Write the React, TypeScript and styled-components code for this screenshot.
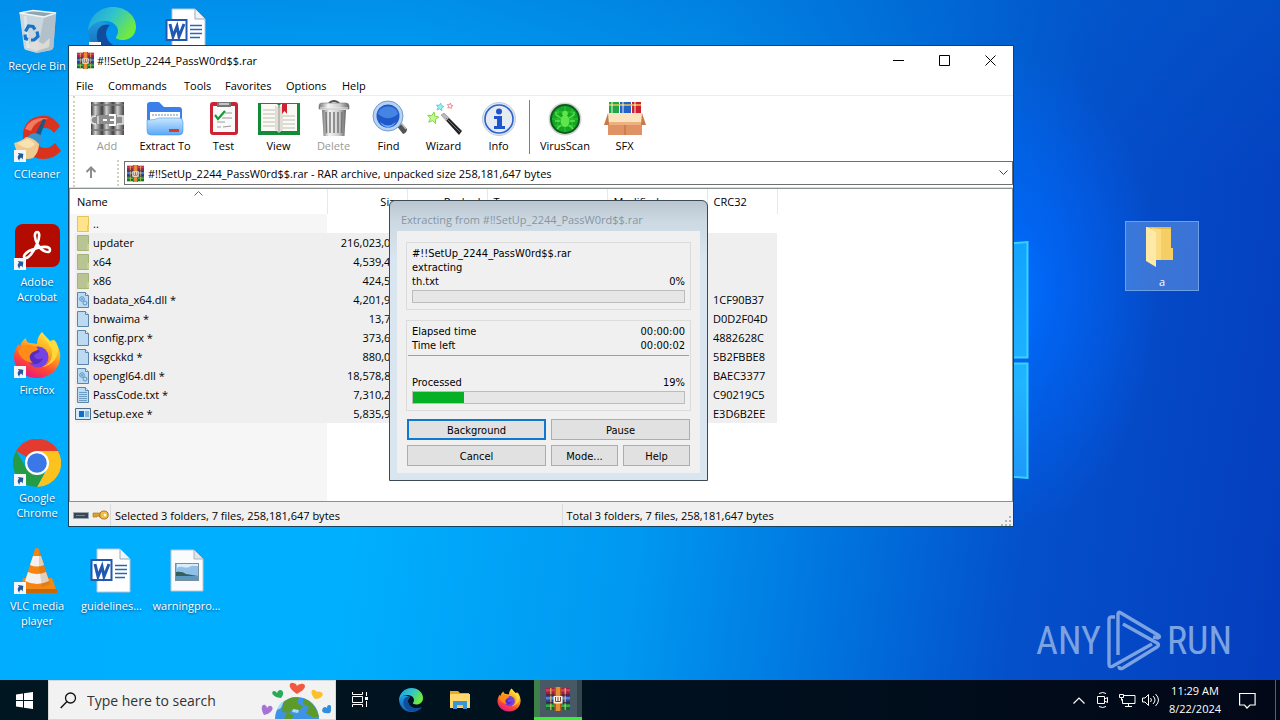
import React from 'react';
import styled, { createGlobalStyle } from 'styled-components';

const GlobalStyle = createGlobalStyle`
  *, *::before, *::after { box-sizing: border-box; }
  body { margin: 0; font-family: "Open Sans", "Noto Sans", sans-serif; font-size: 11px; line-height: 15px; color: #000; }
  button, input, select { font: inherit; color: inherit; margin: 0; }
  button { cursor: default; }
  svg { display: block; flex: none; }
`;

/* ---------- desktop ---------- */

const Screen = styled.div`
  min-height: 100vh;
  display: flex;
  flex-direction: column;
  overflow: hidden;
`;

const Desktop = styled.main`
  position: relative;
  flex: 1;
  min-height: 680px;
  overflow: hidden;
  background:
    radial-gradient(ellipse 150px 240px at 1010px 290px, #0070ff 0%, rgba(0, 106, 255, 0.7) 30%, rgba(0, 85, 225, 0) 100%),
    linear-gradient(180deg, rgba(0, 92, 200, 0.38) 0%, rgba(0, 92, 200, 0) 26%),
    linear-gradient(98deg, #00adff 0%, #00b0ff 30%, #0098f0 52%, #0070dc 68%, #0450cb 80%, #043dbd 100%);
`;

const Wallpaper = styled.svg`
  position: absolute;
  left: 0;
  top: 0;
`;

const IconGrid = styled.div`
  display: grid;
  grid-template-columns: 74px 75px 75px;
  grid-template-rows: repeat(6, 108px);
  padding-top: 5px;
`;

const Shortcut = styled.button<{ $col: number; $row: number }>`
  grid-column: ${(p) => p.$col};
  grid-row: ${(p) => p.$row};
  display: flex;
  flex-direction: column;
  align-items: center;
  gap: 3px;
  padding: 2px 0 0;
  border: 0;
  background: none;
  color: #fff;
  text-shadow: 0 1px 2px rgba(0, 30, 80, 0.7);
`;

const ShortcutLabel = styled.span`
  max-width: 72px;
  min-height: 30px;
`;

const SelectedFolder = styled.button`
  position: absolute;
  right: 81px;
  top: 221px;
  width: 74px;
  height: 70px;
  display: flex;
  flex-direction: column;
  align-items: center;
  gap: 6px;
  padding: 4px 0 0;
  border: 1px solid #6ba0e6;
  background: rgba(112, 160, 230, 0.5);
  color: #fff;
`;

const Watermark = styled.div`
  position: absolute;
  right: 48px;
  bottom: 7px;
  display: flex;
  align-items: center;
  gap: 5px;
  font-family: "Roboto Condensed", "Open Sans Condensed", sans-serif;
  font-size: 38px;
  font-weight: 400;
  line-height: 64px;
  color: #7ba3e2;
`;

/* ---------- archive window ---------- */

const Window = styled.section`
  position: absolute;
  left: 68px;
  right: 266px;
  top: 45px;
  display: flex;
  flex-direction: column;
  border: 1px solid #17425f;
  background: #fff;
`;

const TitleBar = styled.header`
  display: flex;
  align-items: center;
  height: 29px;
  margin-bottom: 1px;
  padding-left: 8px;
`;

const Title = styled.h1`
  flex: 1;
  margin: 0 0 0 3px;
  font-size: 11px;
  font-weight: 400;
`;

const CaptionButton = styled.button`
  width: 46px;
  height: 29px;
  display: grid;
  place-items: center;
  padding: 0;
  border: 0;
  background: none;
`;

const MenuBar = styled.nav`
  display: flex;
  height: 20px;
  gap: 14px;
  padding-left: 7px;
  border-bottom: 1px solid #ececec;
`;

const MenuItem = styled.button<{ $w: number }>`
  width: ${(p) => p.$w}px;
  padding: 0 0 1px;
  border: 0;
  background: none;
  white-space: nowrap;
  text-align: left;
`;

const BarArea = styled.div`
  padding-left: 4px;
  border-bottom: 1px solid #dcdcdc;
`;

const Bars = styled.div`
  border-left: 2px dotted #cdd4b8;
`;

const Toolbar = styled.div`
  display: flex;
  height: 64px;
  padding: 4px 0 0 5px;
`;

const Tool = styled.button<{ $w: number }>`
  width: ${(p) => p.$w}px;
  display: flex;
  flex-direction: column;
  align-items: center;
  height: 54px;
  padding: 0;
  border: 0;
  background: none;
  white-space: nowrap;
  &:disabled { color: #999; }
`;

const ToolSeparator = styled.span`
  width: 1px;
  height: 54px;
  margin: 0 3px;
  background: #808080;
`;

const AddressRow = styled.div`
  display: flex;
  height: 27px;
  align-items: flex-start;
`;

const UpButton = styled.button`
  width: 44px;
  height: 26px;
  padding: 0 0 2px 9px;
  border: 0;
  border-right: 2px dotted #cdd4b8;
  background: none;
`;

const AddressBox = styled.div`
  flex: 1;
  display: flex;
  align-items: center;
  gap: 4px;
  height: 24px;
  margin: 1px 0 0 5px;
  padding: 0 4px 0 2px;
  border: 1px solid #707070;
`;

const AddressSelect = styled.select`
  flex: 1;
  min-width: 0;
  padding: 0;
  border: 0;
  outline: 0;
  background: none;
  appearance: none;
`;

const FileArea = styled.div`
  min-height: 314px;
  padding-left: 5px;
  border: 1px solid #8a9191;
  border-left-color: #9aa4ac;
  background: linear-gradient(#f6f6f6, #f6f6f6) 0 25px / 257px 100% no-repeat;
`;

const FileTable = styled.table`
  width: 702px;
  table-layout: fixed;
  border-collapse: collapse;
`;

const HeadCell = styled.th<{ $w: number; $right?: boolean }>`
  position: relative;
  width: ${(p) => p.$w}px;
  height: 25px;
  padding: 0 6px 1px ${(p) => (p.$w > 200 ? 2 : 6)}px;
  font-weight: 400;
  text-align: ${(p) => (p.$right ? 'right' : 'left')};
  border-right: 1px solid #e8e8e8;
`;

const SortMark = styled.svg`
  position: absolute;
  left: 119px;
  top: 1px;
`;

const FileRow = styled.tr<{ $selected: boolean }>`
  height: 19px;
  background: ${(p) => (p.$selected ? '#efefef' : 'transparent')};
`;

const Cell = styled.td<{ $right?: boolean }>`
  height: 19px;
  padding: 0 4px 0 6px;
  white-space: nowrap;
  text-align: ${(p) => (p.$right ? 'right' : 'left')};
`;

const NameCell = styled.td`
  padding: 0;
`;

const FileName = styled.div`
  display: flex;
  align-items: center;
  height: 19px;
  gap: 2px;
`;

const StatusBar = styled.footer`
  position: relative;
  display: flex;
  height: 24px;
  align-items: flex-end;
  background: #f0f0f0;
`;

const StatusIcons = styled.div`
  display: flex;
  align-items: center;
  width: 42px;
  height: 22px;
  gap: 3px;
  padding-left: 4px;
  border-right: 1px solid #dadada;
`;

const StatusText = styled.div`
  flex: 1;
  height: 22px;
  padding: 4px 0 0 4px;
  & + & { border-left: 1px solid #dadada; }
`;

const SizeGrip = styled.svg`
  position: absolute;
  right: 0;
  bottom: 0;
`;

/* ---------- progress dialog ---------- */

const Dialog = styled.section`
  position: absolute;
  left: 389px;
  top: 200px;
  width: 319px;
  padding: 0 7px 7px;
  border: 1px solid #3c4a58;
  border-radius: 6px 6px 0 0;
  background: linear-gradient(#b9c6d0 0, #ccd9e3 20px, #d9e5ef 60px);
`;

const DialogTitle = styled.h2`
  margin: 0;
  height: 30px;
  padding: 11px 0 0 4px;
  font-size: 11px;
  font-weight: 400;
  line-height: 16px;
  color: #8795a2;
`;

const DialogBody = styled.div`
  padding: 11px 9px 7px;
  background: #f0f0f0;
  font-family: "DejaVu Sans Condensed", "DejaVu Sans", sans-serif;
`;

const Group = styled.div`
  margin-bottom: 10px;
  padding: 4px 5px 6px;
  border: 1px solid #dcdcdc;
  line-height: 14px;
`;

const Line = styled.div`
  display: flex;
  justify-content: space-between;
`;

const Rule = styled.hr`
  margin: 2px -4px 20px;
  border: 0;
  border-top: 1px solid #a0a0a0;
`;

const Meter = styled.div`
  height: 13px;
  margin-top: 1px;
  border: 1px solid #bcbcbc;
  background: #e6e6e6;
`;

const MeterFill = styled.div`
  height: 11px;
  background: #06b025;
`;

const ButtonGrid = styled.div`
  display: grid;
  grid-template-columns: 139px 67px 67px;
  grid-auto-rows: 21px;
  gap: 5px;
  margin: -2px 0 0 1px;
`;

const PushButton = styled.button<{ $wide?: boolean; $focus?: boolean }>`
  grid-column: span ${(p) => (p.$wide ? 2 : 1)};
  padding: 1px 0 0;
  border: 0;
  box-shadow: inset 0 0 0 ${(p) => (p.$focus ? '2px #0f78d0' : '1px #adadad')};
  background: #e1e1e1;
`;

/* ---------- taskbar ---------- */

const Taskbar = styled.footer`
  display: flex;
  height: 40px;
  background: linear-gradient(90deg, #001620, #00101e 55%, #020817);
`;

const PinnedApps = styled.nav`
  display: flex;
  gap: 1px;
  margin-left: 2px;
`;

const TaskButton = styled.button<{ $active?: boolean }>`
  width: 48px;
  height: 40px;
  display: grid;
  place-items: center;
  padding: 0;
  border: 0;
  border-bottom: ${(p) => (p.$active ? '3px solid #35f035' : '0')};
  background: ${(p) => (p.$active ? 'linear-gradient(90deg, #3e8048 6px, #485966 6px, #485966 43px, #33454d 43px)' : 'none')};
`;

const SearchBox = styled.label`
  display: flex;
  align-items: center;
  width: 288px;
  height: 40px;
  padding: 0 4px 0 11px;
  gap: 10px;
  background: #f2f2f2;
  border: 1px solid #d4d8da;
`;

const SearchInput = styled.input`
  flex: 1;
  min-width: 0;
  padding: 2px 0 0;
  border: 0;
  outline: 0;
  background: none;
  font-size: 14px;
  line-height: 20px;
  &::placeholder { color: #333; opacity: 1; }
`;

const Tray = styled.div`
  display: flex;
  align-items: center;
  margin-left: auto;
  color: #fff;
`;

const TrayButton = styled.button<{ $w: number }>`
  width: ${(p) => p.$w}px;
  height: 40px;
  display: grid;
  place-items: center;
  padding: 0;
  border: 0;
  background: none;
`;

const Clock = styled.button`
  width: 56px;
  margin-left: 4px;
  padding: 0;
  border: 0;
  background: none;
  line-height: 18px;
`;

const ShowDesktop = styled.button`
  width: 5px;
  height: 40px;
  margin-left: 4px;
  padding: 0;
  border: 0;
  border-left: 1px solid #59626c;
  background: none;
`;

/* ---------- drawings ---------- */

const Arrow = () => (
  <g>
    <rect x="1" y="35" width="12" height="12" fill="#f4f7fa" />
    <path d="M3.500 44.500c0-4 1.500-5 3.500-5V37.300l4 4-4 4v-2.500c-1.500 0-2.500.2-3.500 1.700z" fill="#245a9c" transform="rotate(-38 7 41)" />
  </g>
);

const BinIcon = () => (
  <svg width="48" height="48" viewBox="0 0 48 48">
    <path d="M6.500 6L43 6 40.500 39.500c-.3 2.500-1 3.200-3 3.700L24 46l-11-3c-1.500-.5-2-1.500-2.200-3.500z" fill="#c9d6dd" />
    <path d="M31 10l12-4-2.500 33.500c-.3 2.500-1 3.200-3 3.700L24 46z" fill="#aab9c2" opacity=".75" />
    <path d="M6.500 6L20 3.500 43 6l-12 4z" fill="#8fa5b1" stroke="#eff5f8" strokeWidth="1.500" />
    <path d="M13 40l9-7 8 4 7-6-1 9-12 4z" fill="#e7e0da" opacity=".8" />
    <path d="M12 9l3 32" stroke="#e8f0f4" strokeWidth="3" opacity=".6" />
    <g fill="none" stroke="#1673c8" strokeWidth="3.200">
      <path d="M12.500 24.500l3-5.500 4.500.5 2 3" /><path d="M24 24.500l1 5-4 3.500h-3" /><path d="M15 32.500l-2.500-1-.5-4" />
    </g>
  </svg>
);

const EdgeShape = ({ size }: { size: number }) => (
  <svg width={size} height={size} viewBox="0 0 48 48">
    <defs>
      <linearGradient id={`ea${size}`} x1="0" y1="0" x2="1" y2=".5"><stop offset="0" stopColor="#1c9ddd" /><stop offset=".5" stopColor="#2fc3cf" /><stop offset="1" stopColor="#6fea3f" /></linearGradient>
      <linearGradient id={`eb${size}`} x1="0" y1="0" x2="0" y2="1"><stop offset="0" stopColor="#1f9be0" /><stop offset="1" stopColor="#1461b0" /></linearGradient>
    </defs>
    <path d="M0 22C0 36 10 48 25 48c8 0 14-3 19-9-9 4-24 1-26-11-1-5 2-8 4-10C12 12 3 15 0 22z" fill={`url(#eb${size})`} />
    <path d="M9 26c1-7 8-10 13-8-3 3-4 6-4 9 1 12 15 16 26 12 1 0 2 0 1 1-7 8-22 9-29 3-5-4-8-10-7-17z" fill="#0f4e9e" />
    <path d="M0 24C1 10 11 0 25 0c13 0 23 9 23 20 0 8-6 13-13 13-5 0-8-2-7-3 1-2 2-3 2-6 0-5-5-10-13-10C9 14 2 18 0 24z" fill={`url(#ea${size})`} />
  </svg>
);

const WordIcon = () => (
  <svg width="48" height="48" viewBox="0 0 48 48">
    <path d="M9 2h23l10 10v33H9z" fill="#fff" stroke="#b9c4d2" />
    <path d="M32 2v10h10" fill="#eef3f9" stroke="#9aa8ba" />
    <path d="M27 18.500h12M27 22.500h12M27 26.500h12M27 30.500h10" stroke="#2b65b4" strokeWidth="1.300" />
    <path d="M3.500 13h20v20h-20z" fill="#fff" stroke="#2159b0" strokeWidth="2" />
    <path d="M7 17l3 12.500 4-10 2 10L21 17" fill="none" stroke="#2159b0" strokeWidth="3" />
  </svg>
);

const PhotoIcon = () => (
  <svg width="48" height="48" viewBox="0 0 48 48">
    <path d="M8 3h23l9 9v32H8z" fill="#fafbfc" stroke="#bcc5cd" />
    <path d="M31 3v9h9" fill="#dfe6eb" stroke="#aab4bd" />
    <rect x="12.500" y="16.500" width="23" height="17" fill="#8ec0e8" stroke="#7a8e9e" />
    <path d="M13 25q6-1 10 2l12 2v1H13z" fill="#35605a" /><path d="M13 29h22v4H13z" fill="#5c97c0" />
    <path d="M14 21c4-3 8 1 12-1s6-1 9-1v-2H14z" fill="#dcecf8" />
  </svg>
);

const CCleanerIcon = () => (
  <svg width="48" height="48" viewBox="0 0 48 48">
    <path d="M47 11C41 3 36 0 28 1 16 2 9 11 10 23c1 13 9 21 20 21 8 0 13-3 18-8l-6-8c-3 3-6 5-10 5-5 0-9-4-9-10s4-10 9-10c4 0 7 2 9 5z" fill="#d9331f" />
    <path d="M12 14C16 5 26 1 36 4c-8 0-15 4-18 12z" fill="#f2795f" />
    <path d="M30 4l3 1-7 19-5-2z" fill="#1d5688" />
    <path d="M18 19c6-2 11 1 12 6l-5 5-12-7z" fill="#3a93cf" />
    <path d="M1 28q8-2 12-6 8 1 13 7 0 8-6 14-6 2-12 0-5-6-7-15z" fill="#efca90" /><path d="M4 28q7-2 10-4 5 1 8 5-3 4-8 4-6-1-10-5z" fill="#fae1b4" />
    <Arrow />
  </svg>
);

const AcrobatIcon = () => (
  <svg width="48" height="48" viewBox="0 0 48 48">
    <rect x="2" y="1" width="45" height="43" rx="8" fill="#b30b00" />
    <path d="M24 9c3 0 3 5 0 12-3 8-9 15-12 14s1-7 9-9c8-3 16-3 16 1s-8 2-12-5c-4-6-4-13-1-13z" fill="none" stroke="#fff" strokeWidth="2.600" />
    <Arrow />
  </svg>
);

const FirefoxShape = ({ size }: { size: number }) => (
  <svg width={size} height={size} viewBox="0 0 48 48">
    <defs>
      <linearGradient id={`fa${size}`} x1=".8" y1="0" x2=".3" y2="1"><stop offset="0" stopColor="#fff04a" /><stop offset=".4" stopColor="#ffa61e" /><stop offset=".7" stopColor="#ff4a33" /><stop offset="1" stopColor="#e31587" /></linearGradient>
    </defs>
    <path d="M29 1c3 4 6 6 8 9l3-1c6 6 8 13 7 19-1 11-11 19-23 19S1 38 1 26c0-5 2-10 5-13 0 0 0 2 1 3 1-5 3-7 6-9 0 3 2 5 5 5l6 1c0-5 2-9 5-12z" fill={`url(#fa${size})`} />
    <circle cx="25" cy="26" r="10.500" fill="#7542e4" />
    <path d="M15 21c4-4 8-3 12-1-2 3-5 2-6 5 1 4 6 4 9 2-2 6-9 8-13 4-3-3-4-7-2-10z" fill="#5a2bc0" />
    <path d="M5 19c4-4 8-6 12-5 3 1 6 1 8 4-2 3-6 2-7 5-2 1-2 6 2 9C12 31 6 26 5 19z" fill="#ff8b19" />
    <path d="M29 1c0 8 9 11 10 20 1 8-4 13-10 15 10-1 17-10 16-20-1-5-4-8-5-7l-1 4C36 9 31 6 29 1z" fill="#ffdf3c" opacity=".85" />
  </svg>
);

const ChromeIcon = () => (
  <svg width="48" height="48" viewBox="0 0 48 48">
    <path d="M24 24L3.200 12A24 24 0 0 1 47 16H24z" fill="#e33b2e" />
    <path d="M24 24V12h21a24 24 0 0 1-21 36l10-18z" fill="#fcc31e" />
    <path d="M24 24l7 11-7 13A24 24 0 0 1 3.200 12L14 30z" fill="#269b46" />
    <circle cx="24" cy="24" r="12" fill="#fff" /><circle cx="24" cy="24" r="9.800" fill="#3b78e7" />
    <Arrow />
  </svg>
);

const VlcIcon = () => (
  <svg width="48" height="48" viewBox="0 0 48 48">
    <path d="M10 31h29l5 14H7z" fill="#f08a13" /><path d="M7 42h37v4H7z" fill="#c9660a" />
    <path d="M22 2q2-2 4 0l11 35q-13 7-26 0z" fill="#f58411" />
    <path d="M20 9h8l3 9q-7 3-14 0z" fill="#f3f0ee" /><path d="M15 25q9 4 18 0l3 9q-12 6-24 0z" fill="#f3f0ee" />
    <path d="M26 2l11 35-8 3-3-20z" fill="#a65a18" opacity=".22" />
    <Arrow />
  </svg>
);

const WithArrow = ({ children }: { children: React.ReactNode }) => (
  <svg width="48" height="48" viewBox="0 0 48 48">{children}<Arrow /></svg>
);

const FolderOpen = () => (
  <svg width="48" height="42" viewBox="0 0 48 42">
    <path d="M9 1h24v21h2v12H16z" fill="#f5ce66" /><path d="M8 1h2l8 5v35l-10-6z" fill="#ffe9a6" />
    <path d="M9 1h24v2H13z" fill="#e5b945" /><path d="M18 7v27h5V3l-10-1z" fill="#fbdc83" />
  </svg>
);

const RarIcon = ({ size = 17 }: { size?: number }) => (
  <svg width={size} height={size} viewBox="0 0 24 24">
    <path d="M0 1h24v7H0z" fill="#9c2148" /><path d="M0 2h24v2.500H0z" fill="#d8385a" />
    <path d="M0 8.500h24v7H0z" fill="#33409a" /><path d="M0 10h24v2.500H0z" fill="#4f86cc" />
    <path d="M0 16h24v7H0z" fill="#0e6a30" /><path d="M0 17.500h24V20H0z" fill="#33ad4e" />
    <path d="M4 1h1.500v22H4zM18.500 1H20v22h-1.500z" fill="#e7c95c" opacity=".7" />
    <path d="M0 8h24M0 15.800h24" stroke="#2a1a35" />
    <path d="M8.500 0h7v24h-7z" fill="#b4561c" /><path d="M10 0h4v24h-4z" fill="#e98f33" />
    <path d="M7.500 9h9v7.500h-9z" fill="#fff1dc" /><path d="M9.500 10v4.500h5V10M12 10v4" fill="none" stroke="#8a3a2a" />
  </svg>
);

const AddIcon = () => (
  <svg width="36" height="38" viewBox="0 0 36 38">
    <defs><linearGradient id="ad"><stop offset="0" stopColor="#3c3c3c" /><stop offset=".4" stopColor="#cfcfcf" /><stop offset="1" stopColor="#444" /></linearGradient></defs>
    {[2, 13, 24].map((x) => (<g key={x}><path d={`M${x} 2h11v33H${x}z`} fill="url(#ad)" /><path d={`M${x} 5h11M${x} 30h11`} stroke="#777" strokeWidth="1.500" /></g>))}
    <rect x="2" y="15" width="33" height="9" fill="#8d8d8d" />
    <path d="M7 16q-5 0-5 4t5 4M9 16v8M28 16h6v8h-6" fill="none" stroke="#e4e4e4" strokeWidth="1.500" />
    <path d="M14 20h4M20 15h6v10h-6M21 20h4" fill="none" stroke="#fff" strokeWidth="1.800" />
  </svg>
);

const ExtractIcon = () => (
  <svg width="38" height="38" viewBox="0 0 38 38">
    <defs><linearGradient id="ex" x1="0" y1="0" x2="0" y2="1"><stop offset="0" stopColor="#c8e7ff" /><stop offset="1" stopColor="#5aa8f6" /></linearGradient></defs>
    <path d="M1 5q0-3 3-3h9l5 5h15q3 0 3 3v16H1z" fill="#3c7fe8" />
    <path d="M4 12h30v9H4z" fill="#fff" /><path d="M6 15h27" stroke="#9fb4cc" strokeWidth="1.500" strokeDasharray="2 1" />
    <path d="M1 20q9 0 12-2h20q4 0 4 4v9q0 4-4 4H5q-4 0-4-4z" fill="url(#ex)" stroke="#4b94ea" strokeWidth=".6" />
    <path d="M23 29h10v3H23z" fill="#dc3a28" />
  </svg>
);

const TestIcon = () => (
  <svg width="38" height="38" viewBox="0 0 38 38">
    <rect x="5" y="2" width="28" height="33" rx="3" fill="#cc2233" /><rect x="8" y="6" width="22" height="26" fill="#fafafa" />
    <path d="M12 2h14v5H12z" fill="#777" /><path d="M14 4h10" stroke="#ddd" strokeWidth="1.500" />
    <path d="M10 15l3 4 7-8" fill="none" stroke="#169a38" strokeWidth="2.200" />
    <path d="M20 13h7M17 18h10M12 22h8M18 27l8-1M12 27h4" stroke="#9a9a9a" strokeWidth="1.200" />
  </svg>
);

const ViewIcon = () => (
  <svg width="44" height="38" viewBox="0 0 44 38">
    <path d="M1 3h42v32H1z" fill="#128a37" /><path d="M4 4h16l2 2 2-2h16v27H24l-2 2-2-2H4z" fill="#fbf9f4" />
    <path d="M22 6v27" stroke="#8a8a80" strokeWidth="1.500" /><path d="M18 5l4 3v24l-4-2zM26 5l-4 3v24l4-2z" fill="#cfccc2" opacity=".6" />
    <path d="M6 10h12M6 14h12M6 18h12M6 22h12M6 26h12M26 16h12M26 20h12M26 24h12M26 28h12" stroke="#bdbdb6" />
    <path d="M25 3h5v11l-2.500-3-2.500 3z" fill="#cf2334" />
  </svg>
);

const DeleteIcon = () => (
  <svg width="38" height="38" viewBox="0 0 38 38">
    <defs><linearGradient id="de"><stop offset="0" stopColor="#777" /><stop offset=".3" stopColor="#f4f4f4" /><stop offset=".7" stopColor="#ccc" /><stop offset="1" stopColor="#666" /></linearGradient></defs>
    <path d="M14 3q5-4 10 0" fill="none" stroke="#555" strokeWidth="2" />
    <path d="M4 6q0-3 3-3h24q3 0 3 3v3H4z" fill="url(#de)" stroke="#777" strokeWidth=".6" /><path d="M7 10h24l-1.500 26h-21z" fill="url(#de)" />
    <path d="M11 12l.5 21M15 12v21M23 12v21M27 12l-.5 21M19 12v21" stroke="#777" strokeWidth="1.500" />
    <path d="M5 8h28" stroke="#eee" />
  </svg>
);

const FindIcon = () => (
  <svg width="40" height="38" viewBox="0 0 40 38">
    <path d="M27 25l4-4 7 8q0 4-4 5z" fill="#555" /><path d="M29 26l3-3 5 6" fill="none" stroke="#bbb" strokeWidth="1.500" />
    <circle cx="19" cy="16" r="15" fill="#b9d2f2" stroke="#6f9bd8" strokeWidth="1" /><circle cx="19" cy="16" r="11.500" fill="#1f58c8" />
    <path d="M9 14c1-10 19-10 20 0-5 5-13 6-20 0z" fill="#4684e4" /><path d="M11 22q8 7 16 0-3 5-8 5t-8-5z" fill="#6fb2ff" />
  </svg>
);

const star = (cx: number, cy: number, r: number) =>
  Array.from({ length: 10 }, (_, i) => {
    const a = (i * Math.PI) / 5 - 1.4;
    const q = i % 2 ? r * 0.45 : r;
    return `${(cx + q * Math.cos(a)).toFixed(1)},${(cy + q * Math.sin(a)).toFixed(1)}`;
  }).join(' ');

const WizardIcon = () => (
  <svg width="38" height="38" viewBox="0 0 38 38">
    <path d="M16 15l3-2 18 18-3 4z" fill="#222" /><path d="M16 15l3-2 5 5-3 3z" fill="#bbb" /><path d="M21 18l14 14" stroke="#777" />
    <polygon points={star(8, 18, 6)} fill="#c9f59a" stroke="#7ddb3c" /><polygon points={star(15, 7, 4)} fill="#9ff0f5" stroke="#4fd5e8" />
    <polygon points={star(25, 6, 3)} fill="#fff" stroke="#ef8a94" />
  </svg>
);

const InfoIcon = () => (
  <svg width="38" height="38" viewBox="0 0 38 38">
    <circle cx="19" cy="19" r="16.500" fill="#dde4ef" stroke="#c3cfdf" /><circle cx="19" cy="19" r="14" fill="#e6eaf1" stroke="#2a63cf" strokeWidth="1.600" />
    <circle cx="19" cy="11.500" r="3" fill="#1f55cc" /><path d="M14 16h8v10h3v3H14v-3h3v-7h-3z" fill="#1f55cc" />
  </svg>
);

const VirusIcon = () => (
  <svg width="38" height="38" viewBox="0 0 38 38">
    <circle cx="19" cy="19" r="16.500" fill="#d4d4d4" /><circle cx="19" cy="19" r="15" fill="#0b5c1c" /><circle cx="19" cy="19" r="13" fill="#15a624" />
    <path d="M6 19h26M19 6v26M9 12h20M9 26h20M12 9v20M26 9v20" stroke="#3dd345" strokeWidth=".7" />
    <ellipse cx="19" cy="21" rx="4.500" ry="6" fill="#5fe64a" /><circle cx="19" cy="13.500" r="2.800" fill="#5fe64a" />
    <path d="M15 18l-5-3v-3M23 18l5-3v-3M14 21H9M24 21h5M15 25l-4 4M23 25l4 4" stroke="#5fe64a" strokeWidth="1.300" fill="none" />
  </svg>
);

const SfxIcon = () => (
  <svg width="42" height="38" viewBox="0 0 42 38">
    <rect x="5" y="2" width="10" height="14" fill="#25a646" /><rect x="16" y="2" width="11" height="14" fill="#2463c8" /><rect x="28" y="2" width="9" height="14" fill="#cb2030" />
    <path d="M5 5h32" stroke="#e8c548" strokeWidth="1.500" /><path d="M8 2v12M19 2v12M31 2v12" stroke="#fff" opacity=".45" strokeWidth="2" />
    <path d="M4 14h34v21H4z" fill="#df9264" /><path d="M4 13h34l1 9H3z" fill="#fbe3bd" /><path d="M4 13L0 25h5zM38 13l4 12h-5z" fill="#c9784a" />
    <path d="M21 22v13" stroke="#b66a3f" /><path d="M5 22h32v3H5z" fill="#eeb07f" />
  </svg>
);

type Kind = 'up' | 'folder' | 'dll' | 'file' | 'txt' | 'exe';

const FileIcon = ({ kind }: { kind: Kind }) => (
  <svg width="16" height="18" viewBox="0 0 16 18">
    {(kind === 'up' || kind === 'folder') && (
      <g><path d="M2.500 1.500h11v15h-11z" fill={kind === 'up' ? '#ffe48c' : '#b9c493'} stroke={kind === 'up' ? '#e6c35a' : '#a6b27a'} /><path d="M12 10h2v6h-2z" fill={kind === 'up' ? '#f2cc60' : '#c9cf8f'} /></g>
    )}
    {(kind === 'dll' || kind === 'file' || kind === 'txt') && (
      <g><path d="M2.500 1.500h8l3 3v12h-11z" fill="#bcdaf2" stroke="#5b86a8" /><path d="M10.500 1.500v3h3" fill="#e6f2fb" stroke="#5b86a8" /></g>
    )}
    {kind === 'txt' && <path d="M4 6.500h8M4 8.500h8M4 10.500h8M4 12.500h8M4 14.500h8" stroke="#6d9cc4" />}
    {kind === 'dll' && <g fill="none" stroke="#5a93c4"><circle cx="7" cy="8" r="2.300" /><circle cx="7" cy="8" r=".6" /><circle cx="10" cy="12" r="2" /></g>}
    {kind === 'exe' && (
      <g><path d="M.5 3.500h15v11H.5z" fill="#d5ebfb" stroke="#4d6c86" /><path d="M4 6h5v6H4z" fill="#0e6fc4" /><path d="M10 7h4M10 9h4M10 11h4" stroke="#3b82bd" /></g>
    )}
  </svg>
);

const EarthArt = () => (
  <svg width="70" height="38" viewBox="0 0 70 38">
    <path d="M14 38a22 22 0 0 1 44 0z" fill="#3f93e6" />
    <path d="M22 22q8-8 16-5l-2 5 6 3-4 5-7-2-3 4-7-1zM42 17q12 4 16 19h-7l-6-4 3-6-6-3zM26 32l7 2-2 4h-8z" fill="#5d9a2c" />
    <path d="M16 29q2-7 7-9l-3 7zM32 28l6 1-1 3-6-1z" fill="#a8def5" />
    <path d="M36 13C25 6 29 1 32 2q3 0 4 3 1-2 4-2c4-1 8 4-4 10z" fill="#f2583e" />
    <path d="M20 17C10 16 10 10 13 10q2 0 3 2 1-3 3-3c4 0 4 5 1 8z" fill="#27ab55" />
    <path d="M54 18C49 13 50 8 53 9q2 0 3 2 1-1 4 0c4 2 1 7-6 7z" fill="#fbc02d" />
    <path d="M3 34C-1 27 1 23 4 24q2 1 2 3 2-3 4-2c4 2 0 8-7 9z" fill="#a573d6" />
    <path d="M69 32c-8 1-9-2-7-5q2-2 4 0 0-3 2-3c3 0 3 5 1 8z" fill="#2c8fe0" />
  </svg>
);

const ExplorerIcon = () => (
  <svg width="24" height="24" viewBox="0 0 24 24">
    <path d="M2 3h8l2 2h9v6H2z" fill="#e8a92c" /><path d="M2 6h20v14H2z" fill="#ffd96b" /><path d="M5 13h14v8h-4v-4H9v4H5z" fill="#3b93d8" /><path d="M9 17h6v2H9z" fill="#f7c444" />
  </svg>
);

/* ---------- data ---------- */

const shortcuts: { label: string; col: number; row: number; icon: React.ReactNode }[] = [
  { label: 'Recycle Bin', col: 1, row: 1, icon: <BinIcon /> },
  { label: 'CCleaner', col: 1, row: 2, icon: <CCleanerIcon /> },
  { label: 'Adobe Acrobat', col: 1, row: 3, icon: <AcrobatIcon /> },
  { label: 'Firefox', col: 1, row: 4, icon: <WithArrow><FirefoxShape size={48} /></WithArrow> },
  { label: 'Google Chrome', col: 1, row: 5, icon: <ChromeIcon /> },
  { label: 'VLC media player', col: 1, row: 6, icon: <VlcIcon /> },
  { label: '', col: 2, row: 1, icon: <WithArrow><EdgeShape size={48} /></WithArrow> },
  { label: 'guidelines...', col: 2, row: 6, icon: <WordIcon /> },
  { label: '', col: 3, row: 1, icon: <WordIcon /> },
  { label: 'warningpro...', col: 3, row: 6, icon: <PhotoIcon /> },
];

const menus: [string, number][] = [['File', 18], ['Commands', 62], ['Tools', 27], ['Favorites', 47], ['Options', 42], ['Help', 26]];

const tools: { label: string; w: number; icon: React.ReactNode; off?: boolean }[] = [
  { label: 'Add', w: 54, icon: <AddIcon />, off: true },
  { label: 'Extract To', w: 62, icon: <ExtractIcon /> },
  { label: 'Test', w: 55, icon: <TestIcon /> },
  { label: 'View', w: 55, icon: <ViewIcon /> },
  { label: 'Delete', w: 55, icon: <DeleteIcon />, off: true },
  { label: 'Find', w: 55, icon: <FindIcon /> },
  { label: 'Wizard', w: 55, icon: <WizardIcon /> },
  { label: 'Info', w: 55, icon: <InfoIcon /> },
];

const moreTools = [
  { label: 'VirusScan', w: 64, icon: <VirusIcon /> },
  { label: 'SFX', w: 55, icon: <SfxIcon /> },
];

const files: { kind: Kind; name: string; size: string; crc: string }[] = [
  { kind: 'up', name: '..', size: '', crc: '' },
  { kind: 'folder', name: 'updater', size: '216,023,040', crc: '' },
  { kind: 'folder', name: 'x64', size: '4,539,408', crc: '' },
  { kind: 'folder', name: 'x86', size: '424,512', crc: '' },
  { kind: 'dll', name: 'badata_x64.dll *', size: '4,201,984', crc: '1CF90B37' },
  { kind: 'file', name: 'bnwaima *', size: '13,756', crc: 'D0D2F04D' },
  { kind: 'file', name: 'config.prx *', size: '373,640', crc: '4882628C' },
  { kind: 'file', name: 'ksgckkd *', size: '880,042', crc: '5B2FBBE8' },
  { kind: 'dll', name: 'opengl64.dll *', size: '18,578,832', crc: 'BAEC3377' },
  { kind: 'txt', name: 'PassCode.txt *', size: '7,310,205', crc: 'C90219C5' },
  { kind: 'exe', name: 'Setup.exe *', size: '5,835,968', crc: 'E3D6B2EE' },
];

/* ---------- page ---------- */

const ArchiveWindow = () => (
  <Window>
    <TitleBar>
      <RarIcon />
      <Title>#!!SetUp_2244_PassW0rd$$.rar</Title>
      <CaptionButton aria-label="Minimize"><svg width="11" height="11"><path d="M0 5.500h11" stroke="#000" /></svg></CaptionButton>
      <CaptionButton aria-label="Maximize"><svg width="11" height="11"><path d="M.5.5h10v10H.5z" fill="none" stroke="#000" /></svg></CaptionButton>
      <CaptionButton aria-label="Close"><svg width="11" height="11"><path d="M.5.5l10 10M10.500.5l-10 10" stroke="#000" /></svg></CaptionButton>
    </TitleBar>
    <MenuBar>{menus.map(([m, w]) => <MenuItem key={m} $w={w}>{m}</MenuItem>)}</MenuBar>
    <BarArea>
      <Bars>
        <Toolbar>
          {tools.map((t) => <Tool key={t.label} $w={t.w} disabled={t.off}>{t.icon}{t.label}</Tool>)}
          <ToolSeparator />
          {moreTools.map((t) => <Tool key={t.label} $w={t.w}>{t.icon}{t.label}</Tool>)}
        </Toolbar>
        <AddressRow>
          <UpButton aria-label="Up one level">
            <svg width="14" height="14" viewBox="0 0 14 14"><path d="M7 13V3M2.500 7L7 2.500 11.500 7" fill="none" stroke="#8c8c8c" strokeWidth="2" /></svg>
          </UpButton>
          <AddressBox>
            <RarIcon />
            <AddressSelect aria-label="Archive">
              <option>#!!SetUp_2244_PassW0rd$$.rar - RAR archive, unpacked size 258,181,647 bytes</option>
            </AddressSelect>
            <svg width="9" height="6"><path d="M.5.5l4 4 4-4" fill="none" stroke="#444" /></svg>
          </AddressBox>
        </AddressRow>
      </Bars>
    </BarArea>
    <FileArea>
      <FileTable>
        <thead>
          <tr>
            <HeadCell $w={252}>Name<SortMark width="10" height="6"><path d="M.5 5.500l4-4 4 4" fill="none" stroke="#666" /></SortMark></HeadCell>
            <HeadCell $w={80} $right>Size</HeadCell>
            <HeadCell $w={80} $right>Packed</HeadCell>
            <HeadCell $w={120}>Type</HeadCell>
            <HeadCell $w={100}>Modified</HeadCell>
            <HeadCell $w={70}>CRC32</HeadCell>
          </tr>
        </thead>
        <tbody>
          {files.map((f) => (
            <FileRow key={f.name} $selected={f.kind !== 'up'}>
              <NameCell><FileName><FileIcon kind={f.kind} />{f.name}</FileName></NameCell>
              <Cell $right>{f.size}</Cell>
              <Cell /><Cell /><Cell />
              <Cell>{f.crc}</Cell>
            </FileRow>
          ))}
        </tbody>
      </FileTable>
    </FileArea>
    <StatusBar>
      <StatusIcons>
        <svg width="16" height="7"><path d="M.5.500h15v6H.5z" fill="#3b4654" stroke="#9aa6b2" /><path d="M3 3.500h9" stroke="#71879c" /></svg>
        <svg width="17" height="10"><path d="M1 3h9v4H7v-1H5v1H1z" fill="#e0a02c" stroke="#a86c10" strokeWidth=".6" /><ellipse cx="12" cy="5" rx="4.200" ry="4" fill="#f2bf4c" stroke="#b07412" /><circle cx="13" cy="5" r="1.300" fill="#fff" /></svg>
      </StatusIcons>
      <StatusText>Selected 3 folders, 7 files, 258,181,647 bytes</StatusText>
      <StatusText>Total 3 folders, 7 files, 258,181,647 bytes</StatusText>
      <SizeGrip width="12" height="12"><path d="M8 2h2v2H8zM4 6h2v2H4zM8 6h2v2H8zM0 10h2v2H0zM4 10h2v2H4zM8 10h2v2H8z" fill="#b4b4b4" /></SizeGrip>
    </StatusBar>
  </Window>
);

const ExtractDialog = () => {
  const processed = 19;
  return (
    <Dialog role="dialog">
      <DialogTitle>Extracting from #!!SetUp_2244_PassW0rd$$.rar</DialogTitle>
      <DialogBody>
        <Group>
          <Line>#!!SetUp_2244_PassW0rd$$.rar</Line>
          <Line>extracting</Line>
          <Line><span>th.txt</span><span>0%</span></Line>
          <Meter role="progressbar" />
        </Group>
        <Group>
          <Line><span>Elapsed time</span><span>00:00:00</span></Line>
          <Line><span>Time left</span><span>00:00:02</span></Line>
          <Rule />
          <Line><span>Processed</span><span>{processed}%</span></Line>
          <Meter role="progressbar"><MeterFill style={{ width: `${processed}%` }} /></Meter>
        </Group>
        <ButtonGrid>
          <PushButton $focus>Background</PushButton>
          <PushButton $wide>Pause</PushButton>
          <PushButton>Cancel</PushButton>
          <PushButton>Mode...</PushButton>
          <PushButton>Help</PushButton>
        </ButtonGrid>
      </DialogBody>
    </Dialog>
  );
};

export default function App() {
  return (
    <Screen>
      <GlobalStyle />
      <Desktop>
        <Wallpaper width="1280" height="680" viewBox="0 0 1280 680" aria-hidden="true">
          <defs><linearGradient id="pane" x1="0" y1="0" x2="0" y2="1"><stop offset="0" stopColor="#12a4ff" /><stop offset=".6" stopColor="#22b4ff" /><stop offset="1" stopColor="#1f98fa" /></linearGradient></defs>
          <path d="M960 248l67.500-6v115.500H960zM960 363.500h67.500V478l-67.500-6z" fill="url(#pane)" stroke="#35d4ff" strokeWidth="2" />
        </Wallpaper>
        <IconGrid>
          {shortcuts.map((s) => (
            <Shortcut key={`${s.col}-${s.row}`} $col={s.col} $row={s.row} aria-label={s.label || 'Shortcut'}>
              {s.icon}<ShortcutLabel>{s.label}</ShortcutLabel>
            </Shortcut>
          ))}
        </IconGrid>
        <SelectedFolder><FolderOpen />a</SelectedFolder>
        <Watermark>
          <span>ANY</span>
          <svg width="56" height="64" viewBox="0 0 56 64" fill="none" stroke="#7ba3e2" strokeWidth="3.400">
            <path d="M9 8H5q-2 0-2 3v44q0 4 4 2l39-22" /><path d="M12 46V5q0-3 3-1l37 22q3 2 0 3l-5-1" /><path d="M17 15l34 19q3 2 0 4L17 59q-4 2-4-2" />
          </svg>
          <span>RUN</span>
        </Watermark>
        <ArchiveWindow />
        <ExtractDialog />
      </Desktop>
      <Taskbar>
        <TaskButton aria-label="Start"><svg width="17" height="17"><path d="M0 2.500l7-1V8H0zM8 1.300L17 0v8H8zM0 9h7v6.500l-7-1zM8 9h9v8l-9-1.300z" fill="#fff" /></svg></TaskButton>
        <SearchBox>
          <svg width="17" height="17" viewBox="0 0 17 17"><circle cx="10.500" cy="6" r="5" fill="none" stroke="#111" strokeWidth="1.300" /><path d="M7 9.500L.7 16" stroke="#111" strokeWidth="1.400" /></svg>
          <SearchInput aria-label="Search" placeholder="Type here to search" />
          <EarthArt />
        </SearchBox>
        <PinnedApps>
          <TaskButton aria-label="Task view">
            <svg width="20" height="18" fill="none" stroke="#fff"><path d="M.5 1v2.500h10V1M.5 5.500h10v6H.5zM.5 16v-2.500h10V16M14.500 1v4M14.500 10v6" /><path d="M13 6h3v3h-3z" fill="#fff" stroke="none" /></svg>
          </TaskButton>
          <TaskButton aria-label="Edge"><EdgeShape size={24} /></TaskButton>
          <TaskButton aria-label="File Explorer"><ExplorerIcon /></TaskButton>
          <TaskButton aria-label="Firefox"><FirefoxShape size={24} /></TaskButton>
          <TaskButton $active aria-label="WinRAR"><RarIcon size={24} /></TaskButton>
        </PinnedApps>
        <Tray>
          <TrayButton $w={24} aria-label="Hidden icons"><svg width="12" height="7"><path d="M.5 6.500l5.500-5.500 5.500 5.500" fill="none" stroke="#fff" strokeWidth="1.200" /></svg></TrayButton>
          <TrayButton $w={24} aria-label="Meet now"><svg width="12" height="18" fill="none" stroke="#fff"><path d="M2 2.500q4-2 7 0M2 15.500q4 2 7 0M.5 5.500h7v7h-7zM7.500 8l3-1.500v5l-3-1.500" /></svg></TrayButton>
          <TrayButton $w={24} aria-label="Network"><svg width="17" height="15" fill="none" stroke="#fff"><path d="M5 2.500h11v8H3.500V6M9.500 10.500v3M6 13.500h7M.5 1.500h4v3h-4zM2.500 4.500v3" /></svg></TrayButton>
          <TrayButton $w={24} aria-label="Volume"><svg width="18" height="14" fill="none" stroke="#fff"><path d="M.5 5v4h2.500l3.500 3.500v-11L3 5zM8.500 5q2 2 0 4M11 3q4 4 0 8M13.500 1q6 6 0 12" /></svg></TrayButton>
          <Clock>11:29 AM<br />8/22/2024</Clock>
          <TrayButton $w={48} aria-label="Notifications"><svg width="17" height="17" fill="none" stroke="#fff" strokeWidth="1.200"><path d="M.6 1.500h15.500v11.500H11l-3 3-2.500-3H.6z" /></svg></TrayButton>
          <ShowDesktop aria-label="Show desktop" />
        </Tray>
      </Taskbar>
    </Screen>
  );
}
